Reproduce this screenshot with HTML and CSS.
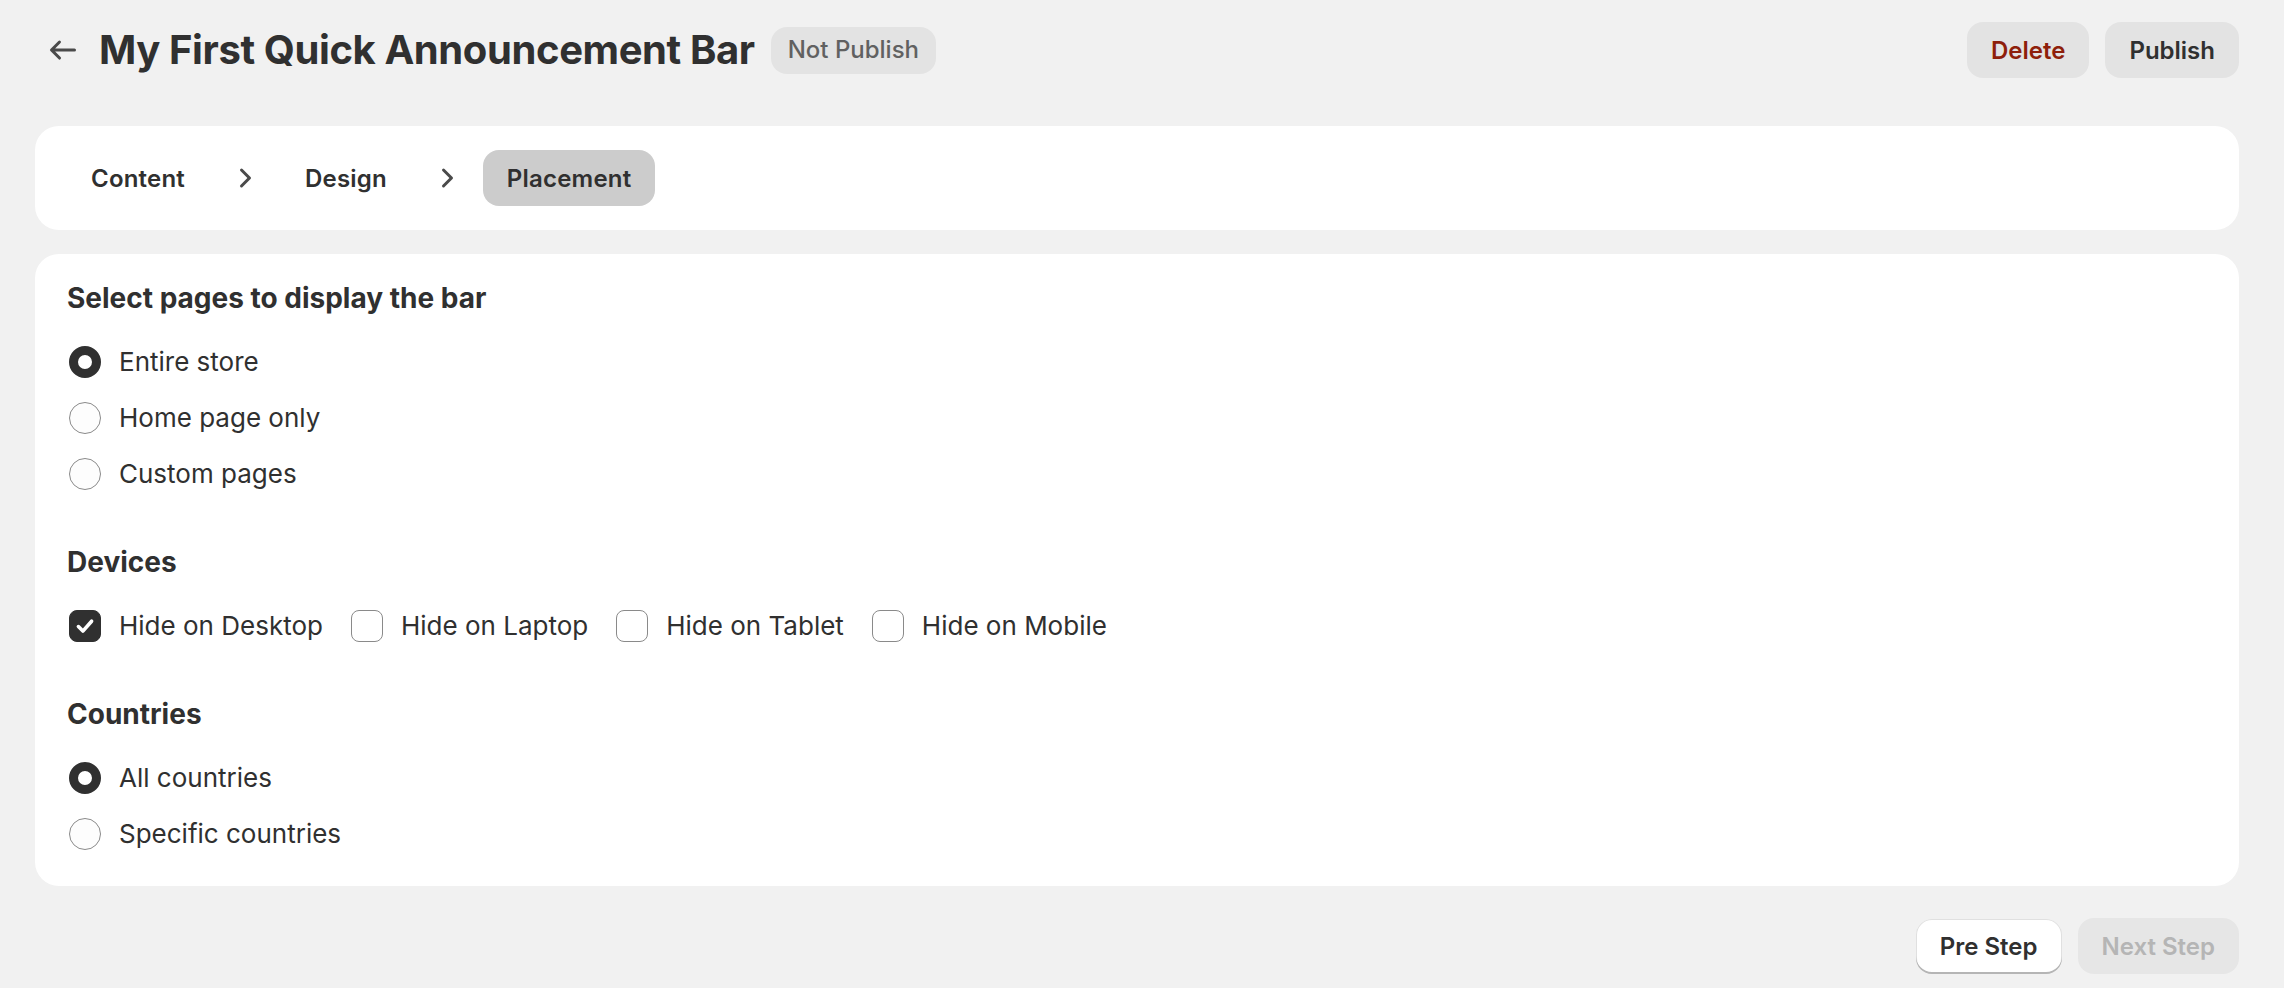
FILE: index.html
```html
<!DOCTYPE html>
<html lang="en">
<head>
    <meta charset="UTF-8">
    <meta name="viewport" content="width=device-width, initial-scale=1.0">
    <title>My First Quick Announcement Bar</title>
    <link rel="stylesheet" href="styles.css">
</head>
<body>
    <div class="page">
        <div class="page-header">
            <div class="title-wrap">
                <button class="back-btn" aria-label="Back">
                    <svg viewBox="0 0 20 20" width="40" height="40"><path d="M16.5 10a.75.75 0 0 1-.75.75h-9.69l2.72 2.72a.75.75 0 1 1-1.06 1.06l-4-4a.75.75 0 0 1 0-1.06l4-4a.75.75 0 0 1 1.06 1.06l-2.72 2.72h9.69a.75.75 0 0 1 .75.75Z"/></svg>
                </button>
                <h1 class="page-title">My First Quick Announcement Bar</h1>
                <span class="badge">Not Publish</span>
            </div>
            <div class="actions">
                <button class="btn btn-danger">Delete</button>
                <button class="btn">Publish</button>
            </div>
        </div>

        <div class="card steps">
            <button class="step">Content</button>
            <svg class="chevron" viewBox="0 0 20 20" width="40" height="40"><path d="M7.72 14.53a.75.75 0 0 1 0-1.06l3.47-3.47-3.47-3.47a.75.75 0 0 1 1.06-1.06l4 4a.75.75 0 0 1 0 1.06l-4 4a.75.75 0 0 1-1.06 0Z"/></svg>
            <button class="step">Design</button>
            <svg class="chevron" viewBox="0 0 20 20" width="40" height="40"><path d="M7.72 14.53a.75.75 0 0 1 0-1.06l3.47-3.47-3.47-3.47a.75.75 0 0 1 1.06-1.06l4 4a.75.75 0 0 1 0 1.06l-4 4a.75.75 0 0 1-1.06 0Z"/></svg>
            <button class="step active">Placement</button>
        </div>

        <div class="card settings">
            <section class="group">
                <h2 class="group-title">Select pages to display the bar</h2>
                <div class="choice-list">
                    <label class="choice"><span class="radio checked"></span>Entire store</label>
                    <label class="choice"><span class="radio"></span>Home page only</label>
                    <label class="choice"><span class="radio"></span>Custom pages</label>
                </div>
            </section>

            <section class="group">
                <h2 class="group-title">Devices</h2>
                <div class="check-row">
                    <label class="choice"><span class="checkbox checked"><svg viewBox="0 0 20 20" width="32" height="32"><path d="M5.6 10.4l3 3 5.8-6.6" /></svg></span>Hide on Desktop</label>
                    <label class="choice"><span class="checkbox"></span>Hide on Laptop</label>
                    <label class="choice"><span class="checkbox"></span>Hide on Tablet</label>
                    <label class="choice"><span class="checkbox"></span>Hide on Mobile</label>
                </div>
            </section>

            <section class="group">
                <h2 class="group-title">Countries</h2>
                <div class="choice-list">
                    <label class="choice"><span class="radio checked"></span>All countries</label>
                    <label class="choice"><span class="radio"></span>Specific countries</label>
                </div>
            </section>
        </div>

        <div class="footer-actions">
            <button class="btn btn-white">Pre Step</button>
            <button class="btn btn-disabled" disabled>Next Step</button>
        </div>
    </div>
</body>
</html>
```

FILE: styles.css
```css
*{
    margin: 0;
    padding: 0;
    box-sizing: border-box;
}
body{
    background: #f1f1f1;
    color: #303030;
    font-family: "Inter", "Noto Sans", sans-serif;
    font-size: 26px;
}
button{
    font-family: inherit;
    border: none;
    background: none;
    cursor: pointer;
}
.page{
    padding: 22px 45px 0 35px;
}
.page-header{
    display: flex;
    align-items: center;
    justify-content: space-between;
    height: 56px;
}
.title-wrap{
    display: flex;
    align-items: center;
}
.back-btn{
    width: 56px;
    height: 56px;
    display: flex;
    align-items: center;
    justify-content: center;
    margin-right: 8px;
}
.back-btn svg{
    fill: #4a4a4a;
}
.page-title{
    font-size: 40px;
    font-weight: 700;
    letter-spacing: -0.4px;
    line-height: 56px;
}
.badge{
    margin-left: 16px;
    background: #e3e3e3;
    color: #616161;
    font-size: 24px;
    font-weight: 500;
    line-height: 32px;
    padding: 7px 17px 8px;
    border-radius: 16px;
}
.actions{
    display: flex;
    gap: 16px;
}
.btn{
    height: 56px;
    padding: 0 24px;
    border-radius: 16px;
    background: #e3e3e3;
    color: #303030;
    font-size: 24px;
    font-weight: 600;
}
.btn-danger{
    color: #8e1f0b;
}
.btn-white{
    background: #fff;
    height: 55px;
    margin-top: 1px;
    box-shadow: inset 0 -2px 0 #b5b5b5, inset 0 0 0 1px #e0e0e0;
}
.btn-disabled{
    background: #e6e6e6;
    color: #b5b5b5;
    cursor: default;
}
.card{
    background: #fff;
    border-radius: 24px;
}
.steps{
    margin-top: 48px;
    display: flex;
    align-items: center;
    gap: 16px;
    padding: 24px 32px;
}
.step{
    height: 56px;
    padding: 0 24px;
    border-radius: 16px;
    font-size: 24px;
    font-weight: 600;
    letter-spacing: 0.2px;
    color: #303030;
}
.step.active{
    background: #cccccc;
}
.chevron{
    fill: #4a4a4a;
}
.settings{
    margin-top: 24px;
    padding: 24px 32px 32px;
    display: flex;
    flex-direction: column;
    gap: 48px;
}
.group-title{
    font-size: 28px;
    font-weight: 700;
    line-height: 40px;
    margin-bottom: 24px;
}
.choice-list{
    display: flex;
    flex-direction: column;
    gap: 16px;
}
.check-row{
    display: flex;
    gap: 26px;
}
.choice{
    display: flex;
    align-items: center;
    gap: 18px;
    line-height: 40px;
    cursor: pointer;
}
.radio{
    width: 32px;
    height: 32px;
    margin-left: 2px;
    border-radius: 50%;
    border: 1.5px solid #8a8a8a;
    background: #fdfdfd;
}
.radio.checked{
    border: 9px solid #303030;
    background: #fff;
}
.checkbox{
    width: 32px;
    height: 32px;
    margin-left: 2px;
    border-radius: 8px;
    border: 1.5px solid #8a8a8a;
    display: flex;
    align-items: center;
    justify-content: center;
}
.checkbox.checked{
    background: #303030;
    border-color: #303030;
}
.checkbox svg{
    fill: none;
    stroke: #fff;
    stroke-width: 2.4;
    stroke-linecap: round;
    stroke-linejoin: round;
}
.footer-actions{
    margin-top: 32px;
    display: flex;
    justify-content: flex-end;
    gap: 16px;
}
```
